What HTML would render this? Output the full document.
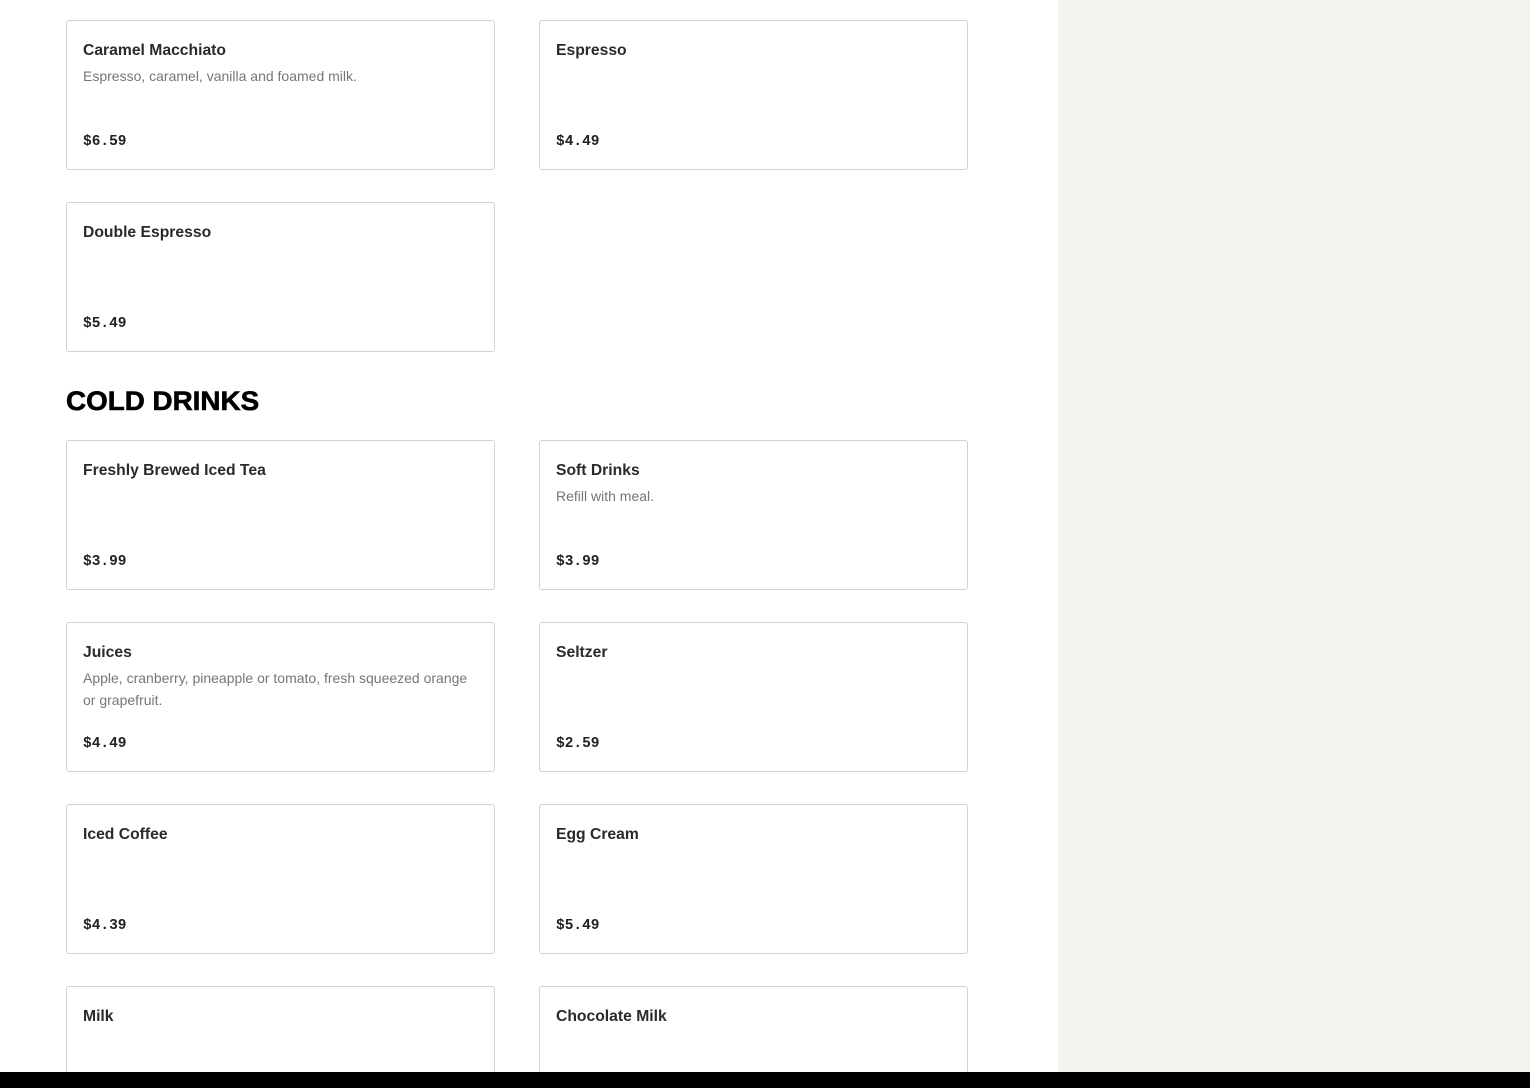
<!DOCTYPE html>
<html><head><meta charset="utf-8"><style>
*{margin:0;padding:0;box-sizing:border-box}
html,body{width:1530px;height:1088px;overflow:hidden}
body{background:#fff;position:relative;font-family:"Liberation Sans",sans-serif}
.side{position:absolute;left:1058px;top:0;width:472px;height:1088px;background:#f4f3f0}
.bar{position:absolute;left:0;top:1072px;width:1530px;height:16px;background:#000;z-index:5}
.card{position:absolute;width:429px;height:150px;border:1px solid #d2d2d2;border-radius:3px;background:#fff}
.t{position:absolute;left:16px;top:21px;font-size:15.7px;font-weight:bold;color:#2a2a2a}
.d{position:absolute;left:16px;top:44px;width:400px;font-size:14px;line-height:22px;color:#767676}
.p{position:absolute;left:16px;top:113px;font-family:"Liberation Mono",monospace;font-weight:bold;font-size:14.5px;color:#222}
h2{position:absolute;left:66px;top:386px;font-size:27px;font-weight:900;color:#000;transform:scaleX(1.03);transform-origin:left;-webkit-text-stroke:0.6px #000;white-space:nowrap}
</style></head><body>
<div class="side"></div>
<div class="card" style="left:66px;top:20px"><div class="t">Caramel Macchiato</div><div class="d">Espresso, caramel, vanilla and foamed milk.</div><div class="p">$6.59</div></div>
<div class="card" style="left:539px;top:20px"><div class="t">Espresso</div><div class="p">$4.49</div></div>
<div class="card" style="left:66px;top:202px"><div class="t">Double Espresso</div><div class="p">$5.49</div></div>
<h2>COLD DRINKS</h2>
<div class="card" style="left:66px;top:440px"><div class="t">Freshly Brewed Iced Tea</div><div class="p">$3.99</div></div>
<div class="card" style="left:539px;top:440px"><div class="t">Soft Drinks</div><div class="d">Refill with meal.</div><div class="p">$3.99</div></div>
<div class="card" style="left:66px;top:622px"><div class="t">Juices</div><div class="d">Apple, cranberry, pineapple or tomato, fresh squeezed orange or grapefruit.</div><div class="p">$4.49</div></div>
<div class="card" style="left:539px;top:622px"><div class="t">Seltzer</div><div class="p">$2.59</div></div>
<div class="card" style="left:66px;top:804px"><div class="t">Iced Coffee</div><div class="p">$4.39</div></div>
<div class="card" style="left:539px;top:804px"><div class="t">Egg Cream</div><div class="p">$5.49</div></div>
<div class="card" style="left:66px;top:986px;height:90px"><div class="t">Milk</div></div>
<div class="card" style="left:539px;top:986px;height:90px"><div class="t">Chocolate Milk</div></div>
<div class="bar"></div>
</body></html>
